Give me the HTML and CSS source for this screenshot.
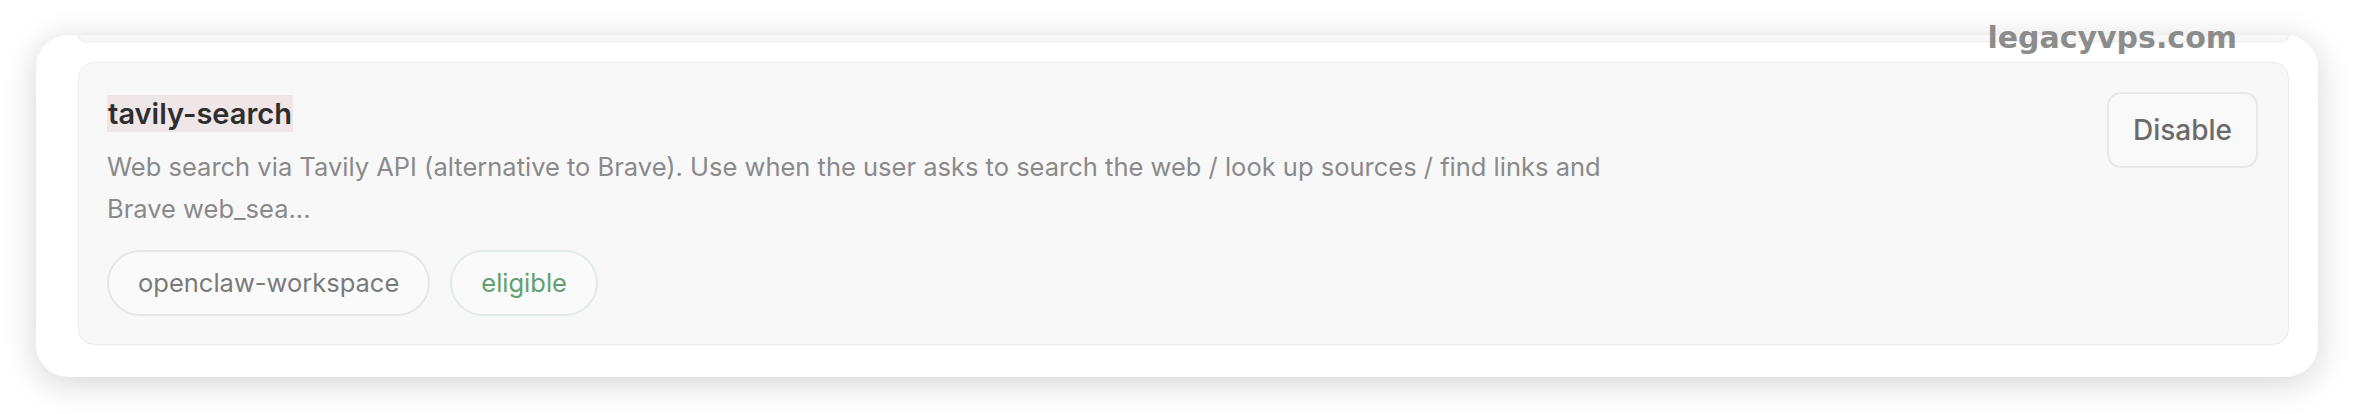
FILE: index.html
```html
<!DOCTYPE html>
<html lang="en">
<head>
    <meta charset="UTF-8">
    <meta name="viewport" content="width=device-width, initial-scale=1.0">
    <title>Skills</title>
    <link rel="stylesheet" href="styles.css">
</head>
<body>
    <div class="page">
        <span class="watermark">legacyvps.com</span>

        <div class="panel">
            <!-- previous skill, scrolled mostly out of view -->
            <div class="skill skill-prev"></div>

            <div class="skill">
                <div class="skill-main">
                    <div class="skill-name"><span>tavily-search</span></div>
                    <p class="skill-desc">Web search via Tavily API (alternative to Brave). Use when the user asks to search the web / look up sources / find links and Brave web_sea...</p>
                    <div class="chips">
                        <span class="chip">openclaw-workspace</span>
                        <span class="chip chip-ok">eligible</span>
                    </div>
                </div>
                <button class="btn">Disable</button>
            </div>
        </div>
    </div>
</body>
</html>
```

FILE: styles.css
```css
body {
    margin: 0;
    background: #ffffff;
    font-family: 'Inter', 'Liberation Sans', sans-serif;
}
.page {
    position: relative;
    padding: 35px 36px 37px 36px;
}
.watermark {
    position: absolute;
    top: 23px;
    right: 117px;
    font-family: 'DejaVu Sans', sans-serif;
    font-weight: bold;
    font-size: 30px;
    line-height: 30px;
    color: #8c8c8c;
    z-index: 2;
}
.panel {
    height: 342px;
    box-sizing: border-box;
    padding: 0 29px 32px 42px;
    background: #ffffff;
    border-radius: 32px;
    box-shadow: 0 6px 34px rgba(0, 0, 0, 0.17);
    overflow: hidden;
    display: flex;
    flex-direction: column;
    gap: 20px;
}
.skill {
    display: flex;
    justify-content: space-between;
    align-items: flex-start;
    padding: 29px 30px 27px 28px;
    background: #f8f8f8;
    border: 1.5px solid #ebebeb;
    border-radius: 16px;
    flex: 1;
}
.skill-prev {
    flex: 0 0 7px;
    padding: 0;
    border-top: none;
    border-radius: 0 0 16px 16px;
    box-sizing: border-box;
}
.skill-name {
    margin-top: 3px;
}
.skill-name span {
    display: inline-block;
    padding: 2px 1px;
    background: #efe6e8;
    font-size: 29px;
    line-height: 33px;
    font-weight: 600;
    color: #2e2e2e;
}
.skill-desc {
    max-width: 1530px;
    margin: 14px 0 0 0;
    font-size: 25.5px;
    line-height: 42px;
    color: #8a8a8a;
}
.chips {
    display: flex;
    gap: 20px;
    margin-top: 20px;
}
.chip {
    padding: 16px 29px;
    border: 2px solid #e6e6e6;
    border-radius: 40px;
    background: #fafafa;
    font-size: 25.5px;
    line-height: 30px;
    color: #7a7a7a;
}
.chip-ok {
    color: #62a070;
    border-color: #e2ebe4;
}
.btn {
    padding: 21px 24px;
    background: #f9f9f9;
    border: 2px solid #e8e8e8;
    border-radius: 14px;
    font-family: 'Inter', 'Liberation Sans', sans-serif;
    font-size: 28px;
    line-height: 30px;
    font-weight: 500;
    color: #6b6b6b;
}
```
